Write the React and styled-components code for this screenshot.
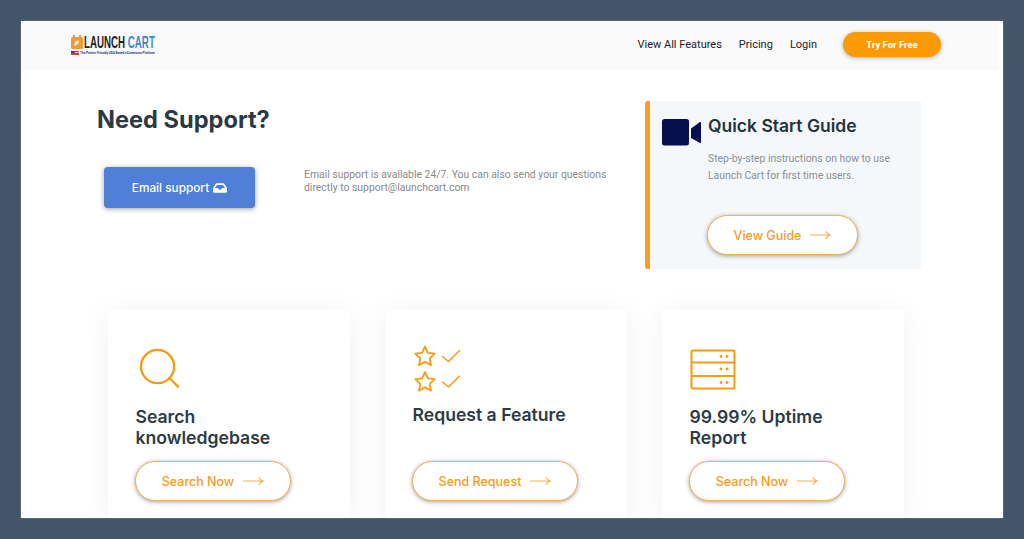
import React from "react";
import styled, { createGlobalStyle } from "styled-components";
import { FaInbox } from "react-icons/fa";

const GlobalStyle = createGlobalStyle`
  html, body {
    margin: 0;
    padding: 0;
    height: 539px;
    overflow: hidden;
    background: #445469;
  }
  * {
    box-sizing: border-box;
  }
`;

const Frame = styled.div`
  width: 1024px;
  height: 539px;
  padding: 21px 21px 21px 21px;
`;
const Page = styled.div`
  width: 982px;
  height: 497px;
  background: #fff;
  overflow: hidden;
  box-shadow: 0 0 1px rgba(255, 255, 255, 0.6);
`;
const Nav = styled.header`
  height: 49px;
  margin-right: 4px;
  padding: 0 58px 2px 50px;
  background: #fafafa;
  display: flex;
  align-items: center;
  justify-content: space-between;
  box-shadow: 0 1px 2px rgba(0, 0, 0, 0.02);
`;
const Logo = styled.div`
  display: flex;
  flex-direction: column;
  gap: 1px;
  width: 86px;
`;
const LogoTop = styled.div`
  display: flex;
  align-items: center;
  gap: 1px;
  height: 16px;
`;
const LogoMark = styled.svg`
  flex: none;
  width: 12px;
  height: 15px;
`;
const LogoWord = styled.span`
  font-family: "Liberation Sans", sans-serif;
  font-weight: 700;
  font-size: 16.5px;
  line-height: 16px;
  white-space: nowrap;
  color: #1d1d1f;
  transform: scaleX(0.59);
  transform-origin: left center;
  b {
    color: #3f86c9;
    font-weight: 700;
  }
`;
const LogoBottom = styled.div`
  display: flex;
  align-items: center;
  gap: 1px;
  height: 4px;
`;
const Tagline = styled.span`
  font-family: "Roboto", sans-serif;
  font-size: 3.1px;
  line-height: 4px;
  font-weight: 700;
  white-space: nowrap;
  color: #24407c;
`;
const NavLinks = styled.nav`
  display: flex;
  align-items: center;
`;
const NavLink = styled.a`
  font-family: "Roboto", sans-serif;
  font-size: 11px;
  font-weight: 400;
  color: #1f2125;
  margin-right: 17px;
`;
const TryButton = styled.button`
  width: 98px;
  height: 25px;
  margin-left: 9px;
  border: 0;
  border-radius: 13px;
  padding: 0;
  background: #fb9a04;
  color: #fff;
  font-family: "Roboto", sans-serif;
  font-size: 9.5px;
  font-weight: 700;
  box-shadow: 0 1px 4px rgba(60, 60, 60, 0.4);
`;
const TopRow = styled.section`
  display: flex;
  height: 240px;
  padding-top: 31px;
`;
const SupportArea = styled.div`
  width: 624px;
  padding-left: 76px;
`;
const Heading = styled.h1`
  margin: 1px 0 0;
  font-family: "Inter", sans-serif;
  font-size: 23.6px;
  line-height: 36px;
  font-weight: 700;
  color: #2b3a42;
`;
const SupportRow = styled.div`
  display: flex;
  align-items: flex-start;
  margin-top: 29px;
  padding-left: 7px;
`;
const EmailButton = styled.button`
  width: 151px;
  height: 41px;
  flex: none;
  border: 0;
  border-radius: 4px;
  padding: 0;
  background: #4f7fd6;
  color: #fff;
  font-family: "Inter", sans-serif;
  font-size: 11.8px;
  font-weight: 500;
  display: flex;
  align-items: center;
  justify-content: center;
  gap: 4px;
  box-shadow: 0 1px 5px rgba(40, 40, 40, 0.45);
`;
const SupportText = styled.p`
  margin: 1px 0 0 49px;
  width: 310px;
  font-family: "Roboto", sans-serif;
  font-size: 10.4px;
  line-height: 13px;
  color: #8a8a8a;
`;
const GuideCard = styled.aside`
  width: 276px;
  height: 168px;
  border-left: 5px solid #fa9f1b;
  border-radius: 3px 0 0 3px;
  background: #f5f8fa;
  display: flex;
  padding: 15px 0 0 12px;
`;
const GuideIcon = styled.svg`
  flex: none;
  width: 39px;
  height: 27px;
  margin-top: 3px;
`;
const GuideBody = styled.div`
  margin-left: 7px;
  display: flex;
  flex-direction: column;
  align-items: flex-start;
`;
const GuideTitle = styled.h2`
  margin: 0;
  font-family: "Inter", sans-serif;
  font-size: 17.5px;
  line-height: 20px;
  font-weight: 600;
  color: #25333b;
`;
const GuideText = styled.p`
  margin: 14px 0 0;
  font-family: "Roboto", sans-serif;
  font-size: 10.4px;
  line-height: 17px;
  color: #8b8f94;
`;
const OutlineButton = styled.button`
  width: ${(p) => p.$width}px;
  height: 40px;
  border: 1.5px solid #eeb155;
  border-radius: 20px;
  padding: 0;
  background: #fff;
  color: #f59c1e;
  font-family: "Inter", sans-serif;
  font-size: 12.5px;
  font-weight: 500;
  display: flex;
  align-items: center;
  justify-content: center;
  gap: 9px;
  flex: none;
  box-shadow: 0 1px 4px rgba(50, 50, 60, 0.45);
`;
const GuideButton = styled(OutlineButton)`
  margin: 31px 0 0 -1px;
`;
const Arrow = styled.svg`
  width: 21px;
  height: 10px;
  flex: none;
`;
const Cards = styled.section`
  display: flex;
  gap: 35px;
  padding-left: 87px;
`;
const Card = styled.article`
  width: 242px;
  height: 210px;
  padding: 34px 0 0 27px;
  background: #fff;
  border-radius: 4px;
  box-shadow: 0 4px 26px rgba(60, 60, 70, 0.08);
  display: flex;
  flex-direction: column;
  align-items: flex-start;
`;
const IconSlot = styled.div`
  height: ${(p) => p.$height}px;
  display: flex;
  align-items: flex-start;
  margin: ${(p) => p.$top || 0}px 0 0 ${(p) => p.$left || 0}px;
`;
const CardTitle = styled.h3`
  margin: 0 0 0 0.5px;
  height: ${(p) => p.$height}px;
  font-family: "Inter", sans-serif;
  font-size: 17.6px;
  line-height: 21px;
  font-weight: 600;
  color: #2d3b44;
`;

const LongArrow = () => (
  <Arrow viewBox="0 0 22 10" fill="none" stroke="#f2b25c" strokeWidth="1.1">
    <path d="M0 5h21M16.5 1c1 2 2.600 3.300 4.500 4-1.900.7-3.500 2-4.500 4" />
  </Arrow>
);

const SearchIcon = () => (
  <svg width="41" height="41" viewBox="0 0 42 42" fill="none" stroke="#fa9a14" strokeWidth="2.400" strokeLinecap="round">
    <circle cx="19" cy="19" r="17" />
    <path d="M31.500 31l8.500 8.500" />
  </svg>
);

const Star = ({ y }) => (
  <path
    transform={`translate(0 ${y})`}
    d="M11 1.500l2.900 6.300 6.800.8-5 4.700 1.300 6.800-6-3.400-6 3.400 1.300-6.800-5-4.700 6.800-.8z"
  />
);

const RatingIcon = () => (
  <svg width="48" height="48" viewBox="0 0 48 48" fill="none" stroke="#fa9a14" strokeWidth="1.800" strokeLinejoin="round" strokeLinecap="round">
    <Star y={0} />
    <Star y={25.500} />
    <path d="M28.500 11.500l6 5 11-11M28.500 37l6 5 11-11" strokeWidth="1.500" />
  </svg>
);

const ServerIcon = () => (
  <svg width="46" height="41" viewBox="0 0 46 41" fill="none" stroke="#fa9a14" strokeWidth="2">
    <rect x="1.500" y="1.500" width="43" height="38" rx="1.500" />
    <path d="M1.500 13.500h43M1.500 27h43" />
    <path
      d="M31 7.500h.1M37 7.500h.1M31 20h.1M37 20h.1M31 33.500h.1M37 33.500h.1"
      strokeWidth="2.800"
      strokeLinecap="round"
    />
  </svg>
);

export default function App() {
  return (
    <Frame>
      <GlobalStyle />
      <Page>
        <Nav>
          <Logo>
            <LogoTop>
              <LogoMark viewBox="0 0 12 15">
                <rect y="2" width="12" height="12" rx="1.500" fill="#ee9b35" />
                <rect x="2" width="2" height="4" fill="#ee9b35" />
                <rect x="8" width="2" height="4" fill="#ee9b35" />
                <path d="M3 11l1-4 4-2-1 4z" fill="#f6f3ec" />
              </LogoMark>
              <LogoWord>
                LAUNCH <b>CART</b>
              </LogoWord>
            </LogoTop>
            <LogoBottom>
              <svg width="8" height="4" viewBox="0 0 8 4">
                <rect width="8" height="4" fill="#c9404c" />
                <rect y="1.300" width="8" height="0.700" fill="#f3e5e5" />
                <rect width="3.500" height="2" fill="#2d3f85" />
              </svg>
              <Tagline>The Painter Friendly USA Based eCommerce Platform</Tagline>
            </LogoBottom>
          </Logo>
          <NavLinks>
            <NavLink>View All Features</NavLink>
            <NavLink>Pricing</NavLink>
            <NavLink>Login</NavLink>
            <TryButton>Try For Free</TryButton>
          </NavLinks>
        </Nav>
        <TopRow>
          <SupportArea>
            <Heading>Need Support?</Heading>
            <SupportRow>
              <EmailButton>
                Email support <FaInbox size={14} />
              </EmailButton>
              <SupportText>
                Email support is available 24/7. You can also send your questions directly to
                support@launchcart.com
              </SupportText>
            </SupportRow>
          </SupportArea>
          <GuideCard>
            <GuideIcon viewBox="0 0 39 27">
              <rect width="27" height="26.500" rx="2.500" fill="#070f4e" />
              <path d="M29 9.500l9-6.500q1-.5 1 1v19q0 1.500-1 1l-9-5z" fill="#070f4e" />
            </GuideIcon>
            <GuideBody>
              <GuideTitle>Quick Start Guide</GuideTitle>
              <GuideText>
                Step-by-step instructions on how to use
                <br />
                Launch Cart for first time users.
              </GuideText>
              <GuideButton $width={151}>
                View Guide <LongArrow />
              </GuideButton>
            </GuideBody>
          </GuideCard>
        </TopRow>
        <Cards>
          <Card>
            <IconSlot $height={58} $top={4} $left={4}>
              <SearchIcon />
            </IconSlot>
            <CardTitle $height={55}>
              Search
              <br />
              knowledgebase
            </CardTitle>
            <OutlineButton $width={156}>
              Search Now <LongArrow />
            </OutlineButton>
          </Card>
          <Card>
            <IconSlot $height={59} $top={1} $left={2}>
              <RatingIcon />
            </IconSlot>
            <CardTitle $height={57}>Request a Feature</CardTitle>
            <OutlineButton $width={166}>
              Send Request <LongArrow />
            </OutlineButton>
          </Card>
          <Card>
            <IconSlot $height={57} $top={5} $left={1}>
              <ServerIcon />
            </IconSlot>
            <CardTitle $height={55}>
              99.99% Uptime
              <br />
              Report
            </CardTitle>
            <OutlineButton $width={156}>
              Search Now <LongArrow />
            </OutlineButton>
          </Card>
        </Cards>
      </Page>
    </Frame>
  );
}
